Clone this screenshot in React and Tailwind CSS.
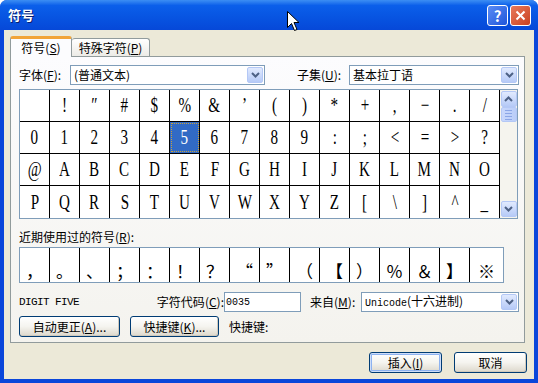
const ROWS = [
  [' ', '!', '″', '#', '$', '%', '&', '’', '(', ')', '*', '+', ',', '−', '.', '/'],
  ['0', '1', '2', '3', '4', '5', '6', '7', '8', '9', ':', ';', '<', '=', '>', '?'],
  ['@', 'A', 'B', 'C', 'D', 'E', 'F', 'G', 'H', 'I', 'J', 'K', 'L', 'M', 'N', 'O'],
  ['P', 'Q', 'R', 'S', 'T', 'U', 'V', 'W', 'X', 'Y', 'Z', '[', '\\', ']', '^', '_'],
];

const RECENT = ['，', '。', '、', '；', '：', '！', '？', '“', '”', '（', '【', '）', '％', '＆', '】', '※'];

// underlined access key
const Key = ({ k }) => (
  <span>
    (<span className="underline">{k}</span>)
  </span>
);

const Chevron = ({ up }) => (
  <svg width="9" height="6" viewBox="0 0 9 6">
    <path
      d={up ? 'M1 5 L4.5 1.5 L8 5' : 'M1 1 L4.5 4.5 L8 1'}
      fill="none"
      stroke="#4D6185"
      strokeWidth="2"
    />
  </svg>
);

const ArrowBtn = ({ up }) => (
  <div className="flex h-[16px] w-[16px] items-center justify-center rounded-[2px] border border-[#B4C8F6] bg-linear-to-b from-[#E1EAFE] to-[#B6CAF7]">
    <Chevron up={up} />
  </div>
);

const Select = ({ className, children }) => (
  <div
    className={`flex h-[20px] items-center border border-[#7F9DB9] bg-white pl-[3px] pr-[1px] ${className}`}
  >
    <div className="flex-1 truncate text-[12px] leading-[18px]">{children}</div>
    <ArrowBtn />
  </div>
);

const Btn = ({ className, def, children }) => (
  <div
    className={`flex items-center justify-center rounded-[3px] border border-[#003C74] bg-linear-to-b from-white via-[#F5F4EF] to-[#DDD8CC] text-[12px] ${
      def
        ? 'shadow-[inset_0_0_0_1px_#CEDDF8,inset_0_0_0_2px_#8DB2F0]'
        : 'shadow-[inset_-1px_-1px_0_#D0CABD]'
    } ${className}`}
  >
    {children}
  </div>
);

const App = () => {
  return (
    <div className="relative flex h-[383px] w-[538px] flex-col overflow-hidden rounded-t-[7px] bg-[#0A46DA] font-['Noto_Sans_CJK_SC',sans-serif] text-black">
      {/* TITLE BAR */}
      <div className="flex h-[30px] shrink-0 items-center bg-linear-to-b from-[#3C8EF3] via-[#0B5FEA] via-[18%] to-[#0648D8] pl-[8px] pr-[7px]">
        <span className="text-[13px] font-bold text-white [text-shadow:1px_1px_0_#0A1E6E]">
          符号
        </span>

        <div className="ml-auto flex gap-[2px]">
          <div className="flex h-[21px] w-[21px] items-center justify-center rounded-[3px] border border-white bg-linear-to-br from-[#5A8CF5] to-[#1F55DA] text-[15px] font-bold leading-none text-white">
            ?
          </div>
          <div className="flex h-[21px] w-[21px] items-center justify-center rounded-[3px] border border-white bg-linear-to-br from-[#E8795A] to-[#C9401E]">
            <svg width="11" height="11" viewBox="0 0 11 11">
              <path d="M1.5 1.5 L9.5 9.5 M9.5 1.5 L1.5 9.5" stroke="white" strokeWidth="2" />
            </svg>
          </div>
        </div>
      </div>

      {/* BODY */}
      <div className="mx-[4px] mb-[4px] flex flex-1 flex-col bg-[#ECE9D8] pl-[6px] pr-[9px] pt-[6px]">
        {/* TABS */}
        <div className="flex h-[20px] items-end text-[12px]">
          <div className="relative z-10 -mb-[1px] flex h-[21px] w-[62px] items-center justify-center rounded-t-[3px] border-x border-t-[3px] border-x-[#919B9C] border-t-[#F1A438] bg-[#FCFCFE]">
            符号<Key k="S" />
          </div>
          <div className="flex h-[18px] w-[78px] items-center justify-center rounded-t-[3px] border-r border-t border-[#919B9C] bg-linear-to-b from-white to-[#ECEBE6]">
            特殊字符<Key k="P" />
          </div>
        </div>

        {/* PANEL */}
        <div className="h-[287px] border border-[#919B9C] bg-linear-to-b from-[#FCFCFE] to-[#F4F3EE] pl-[8px] pt-[8px] text-[12px]">
          {/* font + subset */}
          <div className="flex h-[20px] items-center">
            <span className="w-[51px]">
              字体<Key k="F" />:
            </span>
            <Select className="w-[195px]">(普通文本)</Select>
            <span className="ml-[32px] w-[52px]">
              子集<Key k="U" />:
            </span>
            <Select className="w-[170px]">基本拉丁语</Select>
          </div>

          {/* SYMBOL GRID */}
          <div className="mt-[4px] flex w-[499px] border border-[#7F9DB9] bg-white">
            <div className="w-[480px]">
              {ROWS.map((row, r) => (
                <div
                  key={r}
                  className={`flex h-[32px] ${r < 3 ? 'border-b border-black' : ''}`}
                >
                  {row.map((ch, c) => {
                    const sel = r === 1 && c === 5;
                    return (
                      <div
                        key={c}
                        className={`flex w-[30px] items-center justify-center border-r border-black ${
                          sel ? 'bg-[#316AC5] text-white outline-1 outline-dotted -outline-offset-2 outline-[#C9A13B]' : ''
                        }`}
                      >
                        <span className="inline-block scale-x-[0.72] font-['Liberation_Serif',serif] text-[21px] leading-none">
                          {ch}
                        </span>
                      </div>
                    );
                  })}
                </div>
              ))}
            </div>

            {/* scrollbar */}
            <div className="flex w-[17px] flex-col items-center bg-[#F5F4EE] pt-[1px] pb-[1px]">
              <ArrowBtn up />
              <div className="flex h-[15px] w-[16px] flex-col items-center justify-center gap-[2px] rounded-[2px] border border-[#B4C8F6] bg-linear-to-r from-[#C8D7FC] to-[#BACDF8]">
                <div className="h-[1px] w-[7px] bg-[#8BA6E6]" />
                <div className="h-[1px] w-[7px] bg-[#8BA6E6]" />
                <div className="h-[1px] w-[7px] bg-[#8BA6E6]" />
                <div className="h-[1px] w-[7px] bg-[#8BA6E6]" />
              </div>
              <div className="flex-1" />
              <ArrowBtn />
            </div>
          </div>

          {/* RECENT */}
          <div className="mt-[11px] h-[14px] pl-[-1px] leading-[14px]">
            近期使用过的符号<Key k="R" />:
          </div>
          <div className="mt-[3px] flex h-[36px] w-[485px] border border-[#7F9DB9] bg-white">
            {RECENT.map((ch, i) => (
              <div
                key={i}
                className={`flex w-[30px] items-end justify-center pb-[3px] text-[17px] leading-none ${
                  i < 15 ? 'border-r border-black' : 'flex-1'
                }`}
              >
                {ch}
              </div>
            ))}
          </div>

          {/* char info */}
          <div className="mt-[9px] flex h-[20px] items-center">
            <span className="w-[128px] font-['Liberation_Mono',monospace] text-[11px] tracking-[-0.6px]">
              DIGIT FIVE
            </span>
            <span className="w-[77px] text-right">
              字符代码<Key k="C" />:
            </span>
            <div className="flex h-[20px] w-[77px] items-center border border-[#7F9DB9] bg-white pl-[1px] font-['Liberation_Mono',monospace] text-[10px]">
              0035
            </div>
            <span className="ml-[9px] w-[51px]">
              来自<Key k="M" />:
            </span>
            <Select className="w-[158px]">
              <span className="font-['Liberation_Mono',monospace] text-[10px]">Unicode</span>
              (十六进制)
            </Select>
          </div>

          {/* buttons */}
          <div className="mt-[4px] flex h-[21px] items-center">
            <Btn className="h-[21px] w-[101px]">
              自动更正<Key k="A" />...
            </Btn>
            <Btn className="ml-[10px] h-[21px] w-[89px]">
              快捷键<Key k="K" />...
            </Btn>
            <span className="ml-[10px]">快捷键:</span>
          </div>
        </div>

        {/* BOTTOM BUTTONS */}
        <div className="mt-[9px] flex justify-end gap-[12px] pr-[-2px]">
          <Btn def className="h-[21px] w-[73px]">
            插入<Key k="I" />
          </Btn>
          <Btn className="-mr-[2px] h-[21px] w-[73px]">取消</Btn>
        </div>
      </div>

      {/* MOUSE POINTER */}
      <svg
        className="absolute left-[287px] top-[11px]"
        width="13"
        height="21"
        viewBox="0 0 13 21"
      >
        <path
          d="M0.5 0.5 L0.5 16.5 L4.5 12.5 L7.5 19.5 L10 18.5 L7 11.5 L12 11.5 Z"
          fill="white"
          stroke="black"
          strokeWidth="1"
        />
      </svg>
    </div>
  );
};

export default App;
